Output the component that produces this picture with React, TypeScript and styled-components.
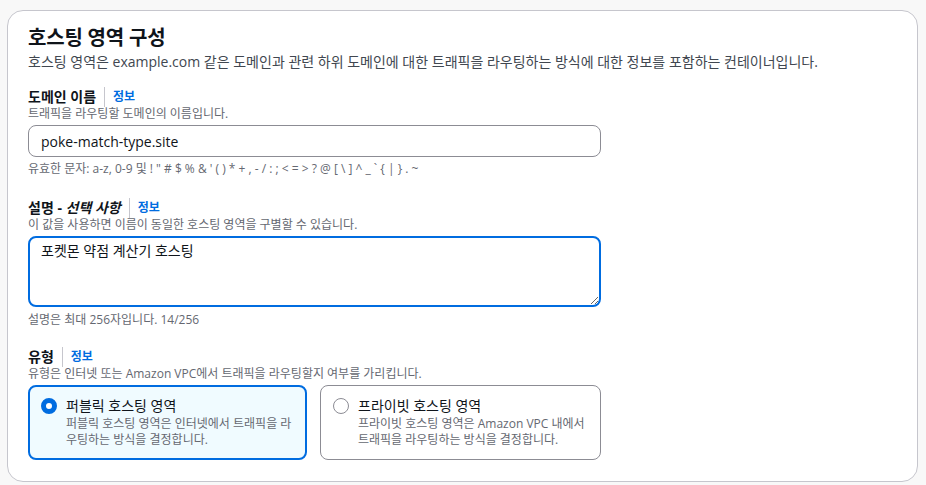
import { useEffect, useRef } from "react";
import styled, { createGlobalStyle } from "styled-components";

const GlobalStyle = createGlobalStyle`
   html, body {
      margin: 0;
      padding: 0;
      background: #f8f8f8;
      font-family: "Open Sans", "Noto Sans CJK KR", sans-serif;
      color: #0f141a;
   }
   * { box-sizing: border-box; }
`

const Page = styled.div`
   padding: 10px 8px 3px 7px;
   width: 926px;
   height: 485px;
   overflow: hidden;
`

const Card = styled.section`
   background: #ffffff;
   border: 1px solid #c6c6cd;
   border-radius: 16px;
   padding: 15px 20px 19px 20px;
   height: 472px;
`

const Heading = styled.h2`
   margin: 0;
   font-size: 20px;
   line-height: 24px;
   font-weight: 700;
   letter-spacing: -0.2px;
`

const Lead = styled.p`
   margin: 2px 0 0 0;
   font-size: 14px;
   line-height: 20px;
   color: #414750;
`

type FieldProps = { gap: number }
const Field = styled.div<FieldProps>`
   margin-top: ${p => p.gap}px;
   width: 573px;
`

const LabelRow = styled.div`
   display: flex;
   align-items: center;
   height: 18px;
`

const Label = styled.span`
   font-size: 14px;
   font-weight: 700;
   line-height: 18px;
   em {
      font-style: italic;
   }
`

const Info = styled.a`
   margin-left: 8px;
   padding-left: 8px;
   border-left: 1px solid #c6c6cd;
   font-size: 12px;
   font-weight: 700;
   line-height: 20px;
   color: #006ce0;
   text-decoration: none;
`

const Hint = styled.div`
   font-size: 12px;
   line-height: 16px;
   color: #656871;
`

const TextInput = styled.input`
   display: block;
   margin: 3px 0 4px 0;
   width: 573px;
   height: 32px;
   padding: 4px 12px;
   border: 1px solid #8c8c94;
   border-radius: 8px;
   font-family: inherit;
   font-size: 14px;
   color: #0f141a;
   outline: none;
`

const TextArea = styled.textarea`
   display: block;
   margin: 3px 0 5px 0;
   width: 573px;
   height: 71px;
   padding: 3px 11px;
   border: 2px solid #006ce0;
   border-radius: 8px;
   font-family: inherit;
   font-size: 14px;
   line-height: 20px;
   color: #0f141a;
   caret-color: #0f141a;
   outline: none;
   resize: vertical;
`

const Tiles = styled.div`
   display: grid;
   grid-template-columns: 279px 281px;
   gap: 13px;
   margin-top: 3px;
`

type TileProps = { selected: boolean }
const Tile = styled.label<TileProps>`
   display: flex;
   gap: 9px;
   height: 75px;
   padding: ${p => (p.selected ? "9px 10px 10px 11px" : "10px 11px 11px 12px")};
   border-radius: 8px;
   border: ${p => (p.selected ? "2px solid #006ce0" : "1px solid #8c8c94")};
   background: ${p => (p.selected ? "#f0fbff" : "#ffffff")};
   cursor: pointer;
`

type DotProps = { selected: boolean }
const Dot = styled.span<DotProps>`
   flex: none;
   margin-top: 2px;
   width: 16px;
   height: 16px;
   border-radius: 50%;
   border: ${p => (p.selected ? "5px solid #006ce0" : "1px solid #8c8c94")};
   background: #ffffff;
`

const TileText = styled.div`
   display: flex;
   flex-direction: column;
`

const TileTitle = styled.span`
   font-size: 14px;
   line-height: 20px;
`

const TileDesc = styled.span`
   font-size: 12px;
   line-height: 16px;
   color: #656871;
`

export default function App() {
   const areaRef = useRef<HTMLTextAreaElement>(null)

   useEffect(() => {
      const el = areaRef.current
      if (el) {
         el.focus()
         el.setSelectionRange(el.value.length, el.value.length)
      }
   }, [])

   return (
      <Page>
         <GlobalStyle />
         <Card>
            <Heading>호스팅 영역 구성</Heading>
            <Lead>호스팅 영역은 example.com 같은 도메인과 관련 하위 도메인에 대한 트래픽을 라우팅하는 방식에 대한 정보를 포함하는 컨테이너입니다.</Lead>

            <Field gap={16}>
               <LabelRow>
                  <Label>도메인 이름</Label>
                  <Info>정보</Info>
               </LabelRow>
               <Hint>트래픽을 라우팅할 도메인의 이름입니다.</Hint>
               <TextInput defaultValue="poke-match-type.site" />
               <Hint>유효한 문자: a-z, 0-9 및 ! " # $ % &amp; ' ( ) * + , - / : ; &lt; = &gt; ? @ [ \ ] ^ _ ` {"{"} | {"}"} . ~</Hint>
            </Field>

            <Field gap={22}>
               <LabelRow>
                  <Label>설명 - <em>선택 사항</em></Label>
                  <Info>정보</Info>
               </LabelRow>
               <Hint>이 값을 사용하면 이름이 동일한 호스팅 영역을 구별할 수 있습니다.</Hint>
               <TextArea ref={areaRef} defaultValue="포켓몬 약점 계산기 호스팅" />
               <Hint>설명은 최대 256자입니다. 14/256</Hint>
            </Field>

            <Field gap={20}>
               <LabelRow>
                  <Label>유형</Label>
                  <Info>정보</Info>
               </LabelRow>
               <Hint>유형은 인터넷 또는 Amazon VPC에서 트래픽을 라우팅할지 여부를 가리킵니다.</Hint>
               <Tiles>
                  <Tile selected>
                     <Dot selected />
                     <TileText>
                        <TileTitle>퍼블릭 호스팅 영역</TileTitle>
                        <TileDesc>퍼블릭 호스팅 영역은 인터넷에서 트래픽을 라우팅하는 방식을 결정합니다.</TileDesc>
                     </TileText>
                  </Tile>
                  <Tile selected={false}>
                     <Dot selected={false} />
                     <TileText>
                        <TileTitle>프라이빗 호스팅 영역</TileTitle>
                        <TileDesc>프라이빗 호스팅 영역은 Amazon VPC 내에서 트래픽을 라우팅하는 방식을 결정합니다.</TileDesc>
                     </TileText>
                  </Tile>
               </Tiles>
            </Field>
         </Card>
      </Page>
   )
}
